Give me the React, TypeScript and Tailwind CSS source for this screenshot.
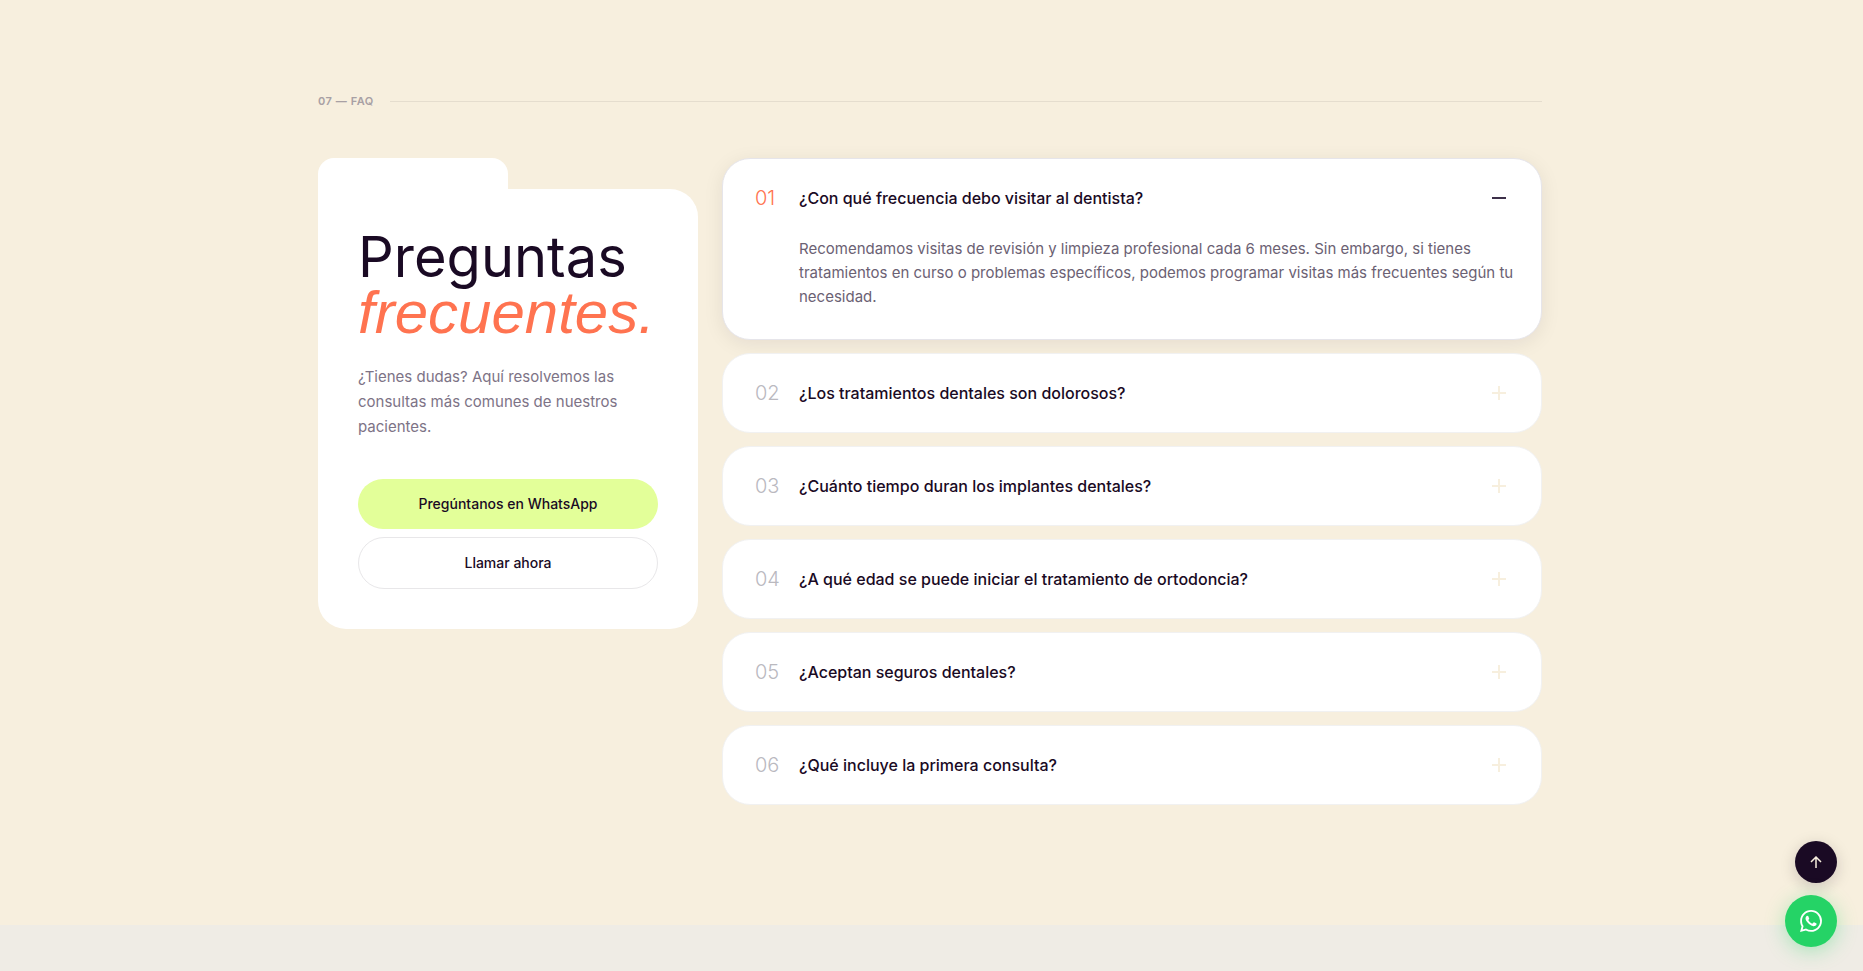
import React, { useState } from "react";
import { SiWhatsapp } from "react-icons/si";

const faqs = [
  {
    question: "¿Con qué frecuencia debo visitar al dentista?",
    answer:
      "Recomendamos visitas de revisión y limpieza profesional cada 6 meses. Sin embargo, si tienes tratamientos en curso o problemas específicos, podemos programar visitas más frecuentes según tu necesidad.",
  },
  {
    question: "¿Los tratamientos dentales son dolorosos?",
    answer: "Trabajamos con anestesia local y técnicas mínimamente invasivas para que no sientas molestias.",
  },
  {
    question: "¿Cuánto tiempo duran los implantes dentales?",
    answer: "Con buena higiene y revisiones periódicas pueden durar toda la vida.",
  },
  {
    question: "¿A qué edad se puede iniciar el tratamiento de ortodoncia?",
    answer: "Recomendamos una primera valoración a partir de los 7 años.",
  },
  {
    question: "¿Aceptan seguros dentales?",
    answer: "Sí, trabajamos con los principales seguros dentales.",
  },
  {
    question: "¿Qué incluye la primera consulta?",
    answer: "Incluye revisión completa, diagnóstico y plan de tratamiento.",
  },
];

type FaqItemProps = {
  index: number;
  question: string;
  answer: string;
  open: boolean;
  onToggle: () => void;
};

const FaqItem: React.FC<FaqItemProps> = ({ index, question, answer, open, onToggle }) => (
  <div
    className={
      open
        ? "rounded-[28px] border border-[#e6e5ea] bg-white shadow-[0_4px_20px_rgba(26,10,36,0.08)]"
        : "rounded-[28px] border border-[#f1f1f1] bg-white"
    }
  >
    <h3>
      <button
        type="button"
        id={`faq-button-${index}`}
        aria-expanded={open}
        aria-controls={`faq-panel-${index}`}
        onClick={onToggle}
        className="flex h-[78px] w-full cursor-pointer items-center px-8 text-left"
      >
        <span className={open ? "w-11 shrink-0 text-xl font-light text-[#ff7350]" : "w-11 shrink-0 text-xl font-light text-[#bab9bf]"}>
          {String(index + 1).padStart(2, "0")}
        </span>
        <span className="flex-1 text-base font-medium text-[#1a0a24]">{question}</span>
        <svg
          viewBox="0 0 14 14"
          className={open ? "mr-[3px] size-3.5 text-[#3d3049]" : "mr-[3px] size-3.5 text-[#f7efde]"}
          fill="none"
          stroke="currentColor"
          strokeWidth="2"
          aria-hidden="true"
        >
          <path d="M0 7h14" />
          {!open && <path d="M7 0v14" />}
        </svg>
      </button>
    </h3>
    {open && (
      <div id={`faq-panel-${index}`} role="region" aria-labelledby={`faq-button-${index}`} className="pr-6 pb-[30px] pl-[76px]">
        <p className="text-[15px] leading-6 text-[#6b6173]">{answer}</p>
      </div>
    )}
  </div>
);

const App: React.FC = () => {
  const [openIndex, setOpenIndex] = useState(0);

  return (
    <div className="min-h-screen bg-[#efece5] font-['Inter',sans-serif] text-[#1a0a24]">
      <section className="bg-[#f7efde] pr-[3px] pt-[90px] pb-[120px]">
        <div className="mx-auto max-w-[1320px] px-12">
          <div className="flex h-[22px] items-center gap-4">
            <span className="text-[11px] font-semibold tracking-wider text-[#a8a0a4]">07 — FAQ</span>
            <span className="h-px flex-1 bg-[#e5ddce]" />
          </div>

          <div className="mt-[46px] grid grid-cols-[380px_1fr] items-start gap-6">
            <div>
              <div className="h-[31px] w-1/2 rounded-t-2xl bg-white" />
              <div className="rounded-[28px] rounded-tl-none bg-white p-10">
                <h2 className="text-[56px] leading-14 font-normal">
                  <span className="block">Preguntas</span>
                  <em className="block font-['Liberation_Sans',sans-serif] text-[60px] leading-14 text-[#ff7350]">frecuentes.</em>
                </h2>
                <p className="mt-[23px] text-[15px] leading-[25px] text-[#7d7386]">
                  ¿Tienes dudas? Aquí resolvemos las consultas más comunes de nuestros pacientes.
                </p>
                <div className="mt-10 flex flex-col gap-2">
                  <a href="#whatsapp" className="flex h-[50px] items-center justify-center rounded-full bg-[#e3ff99] text-sm font-medium">
                    Pregúntanos en WhatsApp
                  </a>
                  <a href="#llamar" className="flex h-[52px] items-center justify-center rounded-full border border-[#e8e7e9] text-sm font-medium">
                    Llamar ahora
                  </a>
                </div>
              </div>
            </div>

            <div className="flex flex-col gap-[13px]">
              {faqs.map((faq, i) => (
                <FaqItem
                  key={faq.question}
                  index={i}
                  question={faq.question}
                  answer={faq.answer}
                  open={openIndex === i}
                  onToggle={() => setOpenIndex(openIndex === i ? -1 : i)}
                />
              ))}
            </div>
          </div>
        </div>
      </section>

      <div className="fixed right-[26px] bottom-6 flex flex-col items-end gap-3">
        <button
          type="button"
          aria-label="Volver arriba"
          onClick={() => window.scrollTo({ top: 0, behavior: "smooth" })}
          className="flex size-[42px] cursor-pointer items-center justify-center rounded-full bg-[#1a0a24] text-[#f7efde] shadow-[0_4px_16px_rgba(26,10,36,0.18)]"
        >
          <svg viewBox="0 0 12 12" className="size-3" fill="none" stroke="currentColor" strokeWidth="1.5" aria-hidden="true">
            <path d="M6 12V1M1 6l5-5 5 5" />
          </svg>
        </button>
        <a
          href="#whatsapp"
          aria-label="WhatsApp"
          className="flex size-[52px] items-center justify-center rounded-full bg-[#25d366] text-white shadow-[0_4px_20px_rgba(37,211,102,0.35)]"
        >
          <SiWhatsapp size={22} aria-hidden="true" />
        </a>
      </div>
    </div>
  );
};

export default App;
